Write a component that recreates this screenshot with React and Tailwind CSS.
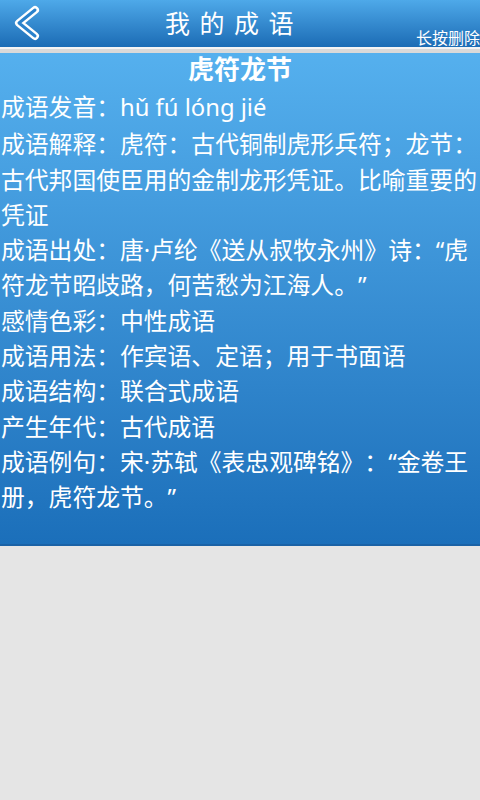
import React from "react";

const lines = [
  "成语发音：hǔ fú lóng jié",
  "成语解释：虎符：古代铜制虎形兵符；龙节：古代邦国使臣用的金制龙形凭证。比喻重要的凭证",
  "成语出处：唐·卢纶《送从叔牧永州》诗：“虎符龙节昭歧路，何苦愁为江海人。”",
  "感情色彩：中性成语",
  "成语用法：作宾语、定语；用于书面语",
  "成语结构：联合式成语",
  "产生年代：古代成语",
  "成语例句：宋·苏轼《表忠观碑铭》：“金卷王册，虎符龙节。”",
];

const BackIcon = () => (
  <svg width="30" height="36" viewBox="0 0 30 36" className="absolute left-[11px] top-[5px]">
    <path d="M24 5 L8 18 L24 31" fill="none" stroke="#ffffff" strokeWidth="8" strokeLinecap="round" strokeLinejoin="round" />
    <path d="M24 5 L8 18 L24 31" fill="none" stroke="#2a82cc" strokeWidth="3" strokeLinecap="round" strokeLinejoin="round" />
  </svg>
);

const App = () => {
  return (
    <div
      lang="zh-CN"
      className="w-[480px] min-h-[800px] bg-[#e5e5e5] text-white [text-spacing-trim:space-all]"
      style={{ fontFamily: '"Noto Sans", "Noto Sans CJK SC", sans-serif' }}
    >
      <div className="relative h-[47px] bg-gradient-to-b from-[#4ea9e9] to-[#1b6cb5] flex items-center justify-center">
        <BackIcon />
        <h1 className="text-[25px] leading-none tracking-[1.5px] pr-[20px]">我 的 成 语</h1>
        <span className="absolute right-0 bottom-[1px] text-[16px] leading-none">长按删除</span>
      </div>
      <div className="h-[2px] bg-[#f4f4f4]" />
      <div className="h-[4px] bg-[#d9d9d9]" />
      <div className="bg-gradient-to-b from-[#55b0ee] to-[#1b6fba] pb-[28px] border-b-2 border-[#1a62a6]">
        <h2 className="text-center text-[26px] font-bold leading-[33px]">虎符龙节</h2>
        {lines.map((t, i) => (
          <p key={t} className={`text-[23.8px] leading-[35.3px] pl-[1px] ${i === 0 ? "mt-[4px] mb-[2px]" : ""}`}>
            {t}
          </p>
        ))}
      </div>
    </div>
  );
};

export default App;
